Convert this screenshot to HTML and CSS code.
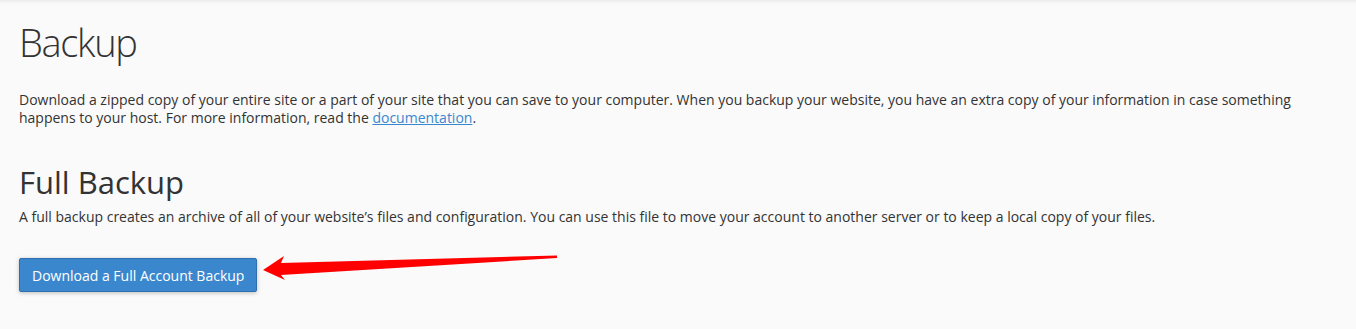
FILE: index.html
```html
<!DOCTYPE html>
<html lang="en">
<head>
<meta charset="utf-8">
<title>Backup</title>
<link rel="stylesheet" href="styles.css">
</head>
<body>
<div class="topshade"></div>
<main class="page">
  <h1 class="title">Backup</h1>
  <p class="intro">Download a zipped copy of your entire site or a part of your site that you can save to your computer. When you backup your website, you have an extra copy of your information in case something happens to your host. For more information, read the <a href="#">documentation</a>.</p>
  <section class="full">
    <h2 class="subtitle">Full Backup</h2>
    <p class="desc">A full backup creates an archive of all of your website’s files and configuration. You can use this file to move your account to another server or to keep a local copy of your files.</p>
    <button class="btn" type="button">Download a Full Account Backup</button>
  </section>
</main>
<svg class="annot" width="1356" height="329" viewBox="0 0 1356 329" aria-hidden="true">
  <polygon points="263,270 284,256 281,263 557,255.5 557,258 281,275 285,280" fill="#ff0000"/>
</svg>
</body>
</html>
```

FILE: styles.css
```css
html, body {
  margin: 0;
  padding: 0;
}
body {
  background: #fafafa;
  font-family: "Open Sans", "Liberation Sans", sans-serif;
  color: #333;
  width: 1356px;
  height: 329px;
  overflow: hidden;
  position: relative;
}
.topshade {
  height: 4px;
  background: linear-gradient(#ececec, #fafafa);
}
.page {
  padding: 0 19px;
}
.title {
  font-weight: 300;
  font-size: 38px;
  letter-spacing: -1.3px;
  line-height: 44px;
  margin: 16px 0 0 0;
  color: #333;
}
.intro {
  font-size: 14px;
  line-height: 18px;
  margin: 27px 0 0 0;
}
.intro a {
  color: #3a87cf;
  text-decoration: underline;
}
.full {
  margin-top: 37px;
}
.subtitle {
  font-weight: 400;
  font-size: 31px;
  line-height: 36px;
  margin: 0 0 8px 0;
  color: #333;
}
.desc {
  font-size: 14px;
  line-height: 18px;
  margin: 0;
}
.btn {
  margin-top: 32px;
  font-family: "Open Sans", "Liberation Sans", sans-serif;
  font-size: 14px;
  color: #fff;
  background: #3b87ce;
  border: 1px solid #2f6fad;
  border-radius: 2px;
  height: 34px;
  padding: 0 12px;
  box-shadow: 0 1px 4px rgba(0,0,0,0.25);
  cursor: pointer;
}
.annot {
  position: absolute;
  left: 0;
  top: 0;
  pointer-events: none;
}
```
